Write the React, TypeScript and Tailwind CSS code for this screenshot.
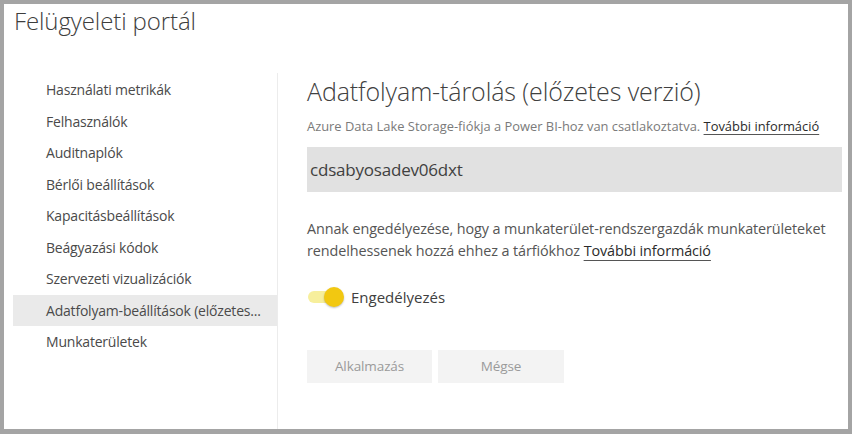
import React from "react";

const navItems = [
  "Használati metrikák",
  "Felhasználók",
  "Auditnaplók",
  "Bérlői beállítások",
  "Kapacitásbeállítások",
  "Beágyazási kódok",
  "Szervezeti vizualizációk",
  "Adatfolyam-beállítások (előzetes...",
  "Munkaterületek",
];

const selected = 7;

const App = () => {
  return (
    <div
      className="w-[852px] h-[434px] bg-[#a4a4a4] pt-[4px] pl-[4px] pr-[4px] pb-[5px]"
      style={{ fontFamily: '"Open Sans", "Noto Sans", sans-serif' }}
    >
      <div className="w-full h-full bg-white flex flex-col">
        <h1 className="pl-[10px] pt-[1px] h-[69px] text-[24px] leading-[32px] font-light text-[#3d3d3d] tracking-[-0.1px]">
          Felügyeleti portál
        </h1>
        <div className="flex flex-1 min-h-0">
          {/* sidebar */}
          <nav className="w-[274px] pl-[9px] border-r border-[#ececec] pt-[1px]">
            {navItems.map((item, index) => (
              <div
                key={index}
                className={
                  "h-[31.5px] pl-[33px] pr-[8px] flex items-center text-[14px] text-[#4a4a4a] whitespace-nowrap tracking-[-0.2px] " +
                  (index === selected ? "bg-[#eaeaea]" : "")
                }
              >
                {item}
              </div>
            ))}
          </nav>

          {/* content */}
          <main className="flex-1 pl-[29px] pr-[6px] pt-[2px]">
            <h2 className="text-[25px] font-light text-[#404040] leading-[32px] tracking-[-0.1px]">
              Adatfolyam-tárolás (előzetes verzió)
            </h2>
            <p className="mt-[10px] text-[12.9px] text-[#7a7a7a] leading-[18px]">
              Azure Data Lake Storage-fiókja a Power BI-hoz van csatlakoztatva.{" "}
              <a className="text-[#2b2b2b] underline underline-offset-[3px] decoration-[#555]">
                További információ
              </a>
            </p>
            <div className="mt-[12px] h-[45px] bg-[#e1e1e1] flex items-center pl-[3px] text-[17px] text-[#404040] tracking-[-0.2px]">
              cdsabyosadev06dxt
            </div>
            <p className="mt-[26px] text-[14.4px] text-[#555] leading-[22px] tracking-[-0.1px]">
              Annak engedélyezése, hogy a munkaterület-rendszergazdák munkaterületeket
              <br />
              rendelhessenek hozzá ehhez a tárfiókhoz{" "}
              <a className="text-[#2b2b2b] underline underline-offset-[4px] decoration-[#555]">
                További információ
              </a>
            </p>
            <div className="mt-[24px] flex items-center h-[22px]">
              <div className="relative w-[38px] h-[22px]">
                <div className="absolute left-[1px] top-[5px] w-[32px] h-[12px] rounded-full bg-[#f7ef9c]" />
                <div className="absolute left-[17px] top-[1px] w-[20px] h-[20px] rounded-full bg-[#f2c811] shadow-[0_1px_2px_rgba(0,0,0,0.25)]" />
              </div>
              <span className="ml-[6px] text-[15px] text-[#404040]">
                Engedélyezés
              </span>
            </div>
            <div className="mt-[42px] flex gap-[6px]">
              <button className="w-[125px] h-[33px] bg-[#f3f3f3] text-[13.5px] text-[#9a9a9a] tracking-[-0.1px]">
                Alkalmazás
              </button>
              <button className="w-[126px] h-[33px] bg-[#f3f3f3] text-[13.5px] text-[#9a9a9a] tracking-[-0.1px]">
                Mégse
              </button>
            </div>
          </main>
        </div>
      </div>
    </div>
  );
};

export default App;
